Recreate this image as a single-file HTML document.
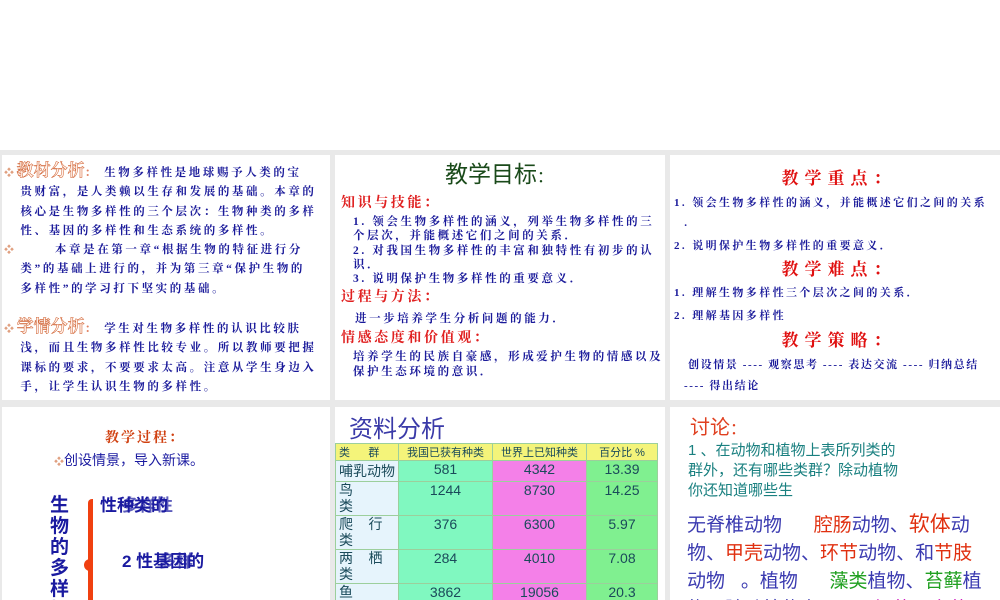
<!DOCTYPE html>
<html><head><meta charset="utf-8"><style>
*{margin:0;padding:0;box-sizing:border-box}
body{width:1000px;height:600px;overflow:hidden;background:#fff;position:relative;font-family:"Liberation Sans","Noto Sans CJK SC",sans-serif}
.band{position:absolute;left:0;top:150px;width:1000px;height:450px;background:#e9e9e9}
.p{position:absolute;background:#fff;overflow:hidden}
.s{font-family:"Liberation Serif","Noto Serif CJK SC",serif}
.b{color:#1a1a9a}
.r{color:#e01010}
.abs{position:absolute;white-space:nowrap}
table{border-collapse:collapse;position:absolute;left:0px;top:36px;font-size:14px;table-layout:fixed;width:322px}
td{border:1px solid #9ccf9c;padding:0 3px;vertical-align:top;color:#1a4a5a}
.n{text-align:center;font-size:14px}
</style></head><body>
<div class="band"></div>

<div class="p" style="left:2px;top:155px;width:328px;height:245px">
 <div class="s b" style="position:absolute;left:2px;top:6px;width:326px;font-size:11.5px;line-height:19.3px;letter-spacing:2.6px;font-weight:bold">
  <span style="color:#e0a080;font-size:10px">❖</span><span style="font-size:17px;-webkit-text-stroke:0.5px #d06030;color:#fff0e8;letter-spacing:0">教材分析</span><span style="color:#e08060">：</span> 生物多样性是地球赐予人类的宝<br>&nbsp;&nbsp;&nbsp;贵财富，是人类赖以生存和发展的基础。本章的<br>&nbsp;&nbsp;&nbsp;核心是生物多样性的三个层次：生物种类的多样<br>&nbsp;&nbsp;&nbsp;性、基因的多样性和生态系统的多样性。<br>
  <span style="color:#e0a080;font-size:10px">❖</span>&nbsp;&nbsp;&nbsp;&nbsp;&nbsp;&nbsp;&nbsp;本章是在第一章“根据生物的特征进行分<br>&nbsp;&nbsp;&nbsp;类”的基础上进行的，并为第三章“保护生物的<br>&nbsp;&nbsp;&nbsp;多样性”的学习打下坚实的基础。
 </div>
 <div class="s b" style="position:absolute;left:2px;top:162px;width:326px;font-size:11.5px;line-height:19.3px;letter-spacing:2.6px;font-weight:bold">
  <span style="color:#e0a080;font-size:10px">❖</span><span style="font-size:17px;-webkit-text-stroke:0.5px #d06030;color:#fff0e8;letter-spacing:0">学情分析</span><span style="color:#e08060">：</span> 学生对生物多样性的认识比较肤<br>&nbsp;&nbsp;&nbsp;浅，而且生物多样性比较专业。所以教师要把握<br>&nbsp;&nbsp;&nbsp;课标的要求，不要要求太高。注意从学生身边入<br>&nbsp;&nbsp;&nbsp;手，让学生认识生物的多样性。
 </div>
</div>

<div class="p" style="left:335px;top:155px;width:330px;height:245px">
 <div class="abs" style="left:110px;top:0px;font-size:23px;color:#1a4a1a">教学目标<span style="font-size:16px">：</span></div>
 <div class="s" style="position:absolute;left:6px;top:38px;width:324px;font-size:11.5px;line-height:14.3px;font-weight:bold;letter-spacing:2.6px">
  <div class="r" style="font-size:14px;line-height:22px;color:#e02020">知识与技能：</div>
  <div class="b" style="padding-left:12px">1. 领会生物多样性的涵义，列举生物多样性的三个层次，并能概述它们之间的关系．<br>2. 对我国生物多样性的丰富和独特性有初步的认识．<br>3. 说明保护生物多样性的重要意义．</div>
  <div class="r" style="font-size:14px;line-height:24px;color:#e02020">过程与方法：</div>
  <div class="b" style="padding-left:14px;line-height:18px">进一步培养学生分析问题的能力．</div>
  <div class="r" style="font-size:14px;line-height:22px;color:#e02020">情感态度和价值观：</div>
  <div class="b" style="padding-left:12px">培养学生的民族自豪感，形成爱护生物的情感以及保护生态环境的意识．</div>
 </div>
</div>

<div class="p" style="left:670px;top:155px;width:330px;height:245px">
 <div class="s" style="position:absolute;left:4px;top:10px;width:330px;font-size:11px;font-weight:bold;letter-spacing:2.4px;white-space:nowrap">
  <div class="r" style="text-align:center;font-size:17px;line-height:28px;letter-spacing:6px">教学重点：</div>
  <div class="b" style="line-height:20px">1. 领会生物多样性的涵义，并能概述它们之间的关系<br>&nbsp;&nbsp;.</div>
  <div class="b" style="line-height:26px">2. 说明保护生物多样性的重要意义．</div>
  <div class="r" style="text-align:center;font-size:17px;line-height:22px;letter-spacing:6px">教学难点：</div>
  <div class="b" style="line-height:24px">1. 理解生物多样性三个层次之间的关系．</div>
  <div class="b" style="line-height:22px">2. 理解基因多样性</div>
  <div class="r" style="text-align:center;font-size:17px;line-height:28px;letter-spacing:6px">教学策略：</div>
  <div class="b" style="padding-left:14px;line-height:21px;letter-spacing:1.6px">创设情景 ---- 观察思考 ---- 表达交流 ---- 归纳总结<br><span style="margin-left:-4px">---- 得出结论</span></div>
 </div>
</div>

<div class="p" style="left:2px;top:407px;width:328px;height:193px">
 <div class="abs s" style="left:103px;top:20px;font-size:14px;color:#d04010;font-weight:bold;letter-spacing:2px">教学过程：</div>
 <div class="abs" style="left:52px;top:43px;font-size:14px;color:#1a1aa0"><span style="color:#e0a080;font-size:10px">❖</span>创设情景，导入新课。</div>
 <div class="abs" style="left:48px;top:88px;font-size:19px;font-weight:bold;color:#1a1aa0;line-height:21px;white-space:normal;width:22px">生物的多样性</div>
 <div style="position:absolute;left:86px;top:92px;width:5px;height:110px;background:#f04010;border-radius:4px 0 0 0"></div>
 <div style="position:absolute;left:82px;top:152px;width:6px;height:12px;border-left:4px solid #f04010;border-radius:6px 0 0 6px"></div>
 <div class="abs" style="left:98px;top:84px;font-size:17px;font-weight:bold;color:#1a1aa0">性种类的</div>
 <div class="abs" style="left:120px;top:84px;font-size:17px;font-weight:bold;color:#1a1aa0;opacity:.7">多样性</div>
 <div class="abs" style="left:120px;top:140px;font-size:17px;font-weight:bold;color:#1a1aa0">2 性基因的</div>
 <div class="abs" style="left:157px;top:140px;font-size:17px;font-weight:bold;color:#1a1aa0;opacity:.7">多样</div>
</div>

<div class="p" style="left:335px;top:407px;width:330px;height:193px">
 <div class="abs" style="left:14px;top:2px;font-size:24px;color:#3a3aa8">资料分析</div>
 <table>
  <colgroup><col style="width:63px"><col style="width:94px"><col style="width:94px"><col style="width:71px"></colgroup>
  <tr style="height:17px;font-size:11px;color:#444"><td style="background:#f4f47a;font-size:11px">类&nbsp;&nbsp;&nbsp;&nbsp;&nbsp;&nbsp;群</td><td style="text-align:center;background:#f4f47a;font-size:11px">我国已获有种类</td><td style="text-align:center;background:#f4f47a;font-size:11px">世界上已知种类</td><td style="text-align:center;background:#f4f47a;font-size:11px">百分比 %</td></tr>
  <tr style="height:19px"><td style="background:#e6f4fc">哺乳动物</td><td class="n" style="background:#80f8c0">581</td><td class="n" style="background:#f480e8">4342</td><td class="n" style="background:#80f090">13.39</td></tr>
  <tr style="height:34px"><td style="background:#e6f4fc;line-height:16px">鸟<br>类</td><td class="n" style="background:#80f8c0">1244</td><td class="n" style="background:#f480e8">8730</td><td class="n" style="background:#80f090">14.25</td></tr>
  <tr style="height:34px"><td style="background:#e6f4fc;line-height:16px">爬&nbsp;&nbsp;&nbsp;&nbsp;行<br>类</td><td class="n" style="background:#80f8c0">376</td><td class="n" style="background:#f480e8">6300</td><td class="n" style="background:#80f090">5.97</td></tr>
  <tr style="height:34px"><td style="background:#e6f4fc;line-height:16px">两&nbsp;&nbsp;&nbsp;&nbsp;栖<br>类</td><td class="n" style="background:#80f8c0">284</td><td class="n" style="background:#f480e8">4010</td><td class="n" style="background:#80f090">7.08</td></tr>
  <tr style="height:34px"><td style="background:#e6f4fc;line-height:16px">鱼<br>类</td><td class="n" style="background:#80f8c0">3862</td><td class="n" style="background:#f480e8">19056</td><td class="n" style="background:#80f090">20.3</td></tr>
 </table>
</div>

<div class="p" style="left:670px;top:407px;width:330px;height:193px">
 <div class="abs" style="left:20px;top:4px;font-size:20px;color:#e04020">讨论<span style="font-size:16px">：</span></div>
 <div style="position:absolute;left:18px;top:34px;font-size:15px;line-height:20px;color:#1a8080;white-space:nowrap">1 、在动物和植物上表所列类的<br>群外，还有哪些类群？除动植物<br>你还知道哪些生</div>
 <div style="position:absolute;left:17px;top:104px;width:300px;font-size:19px;line-height:28px;color:#3a3ab0;white-space:nowrap">无脊椎动物&nbsp;&nbsp;&nbsp;&nbsp;&nbsp;&nbsp;<span style="color:#e03010">腔肠</span>动物、<span style="color:#e03010;font-size:21px">软体</span>动<br>物、<span style="color:#e03010">甲壳</span>动物、<span style="color:#e03010">环节</span>动物、和<span style="color:#e03010">节肢</span><br>动物&nbsp;&nbsp;&nbsp;。植物&nbsp;&nbsp;&nbsp;&nbsp;&nbsp;&nbsp;<span style="color:#20a020">藻类</span>植物、<span style="color:#20a020">苔藓</span>植<br>物，除动植物有&nbsp;&nbsp;&nbsp;&nbsp;&nbsp;&nbsp;&nbsp;&nbsp;&nbsp;&nbsp;<span style="color:#d020c0">细菌、真菌</span></div>
</div>
</body></html>
